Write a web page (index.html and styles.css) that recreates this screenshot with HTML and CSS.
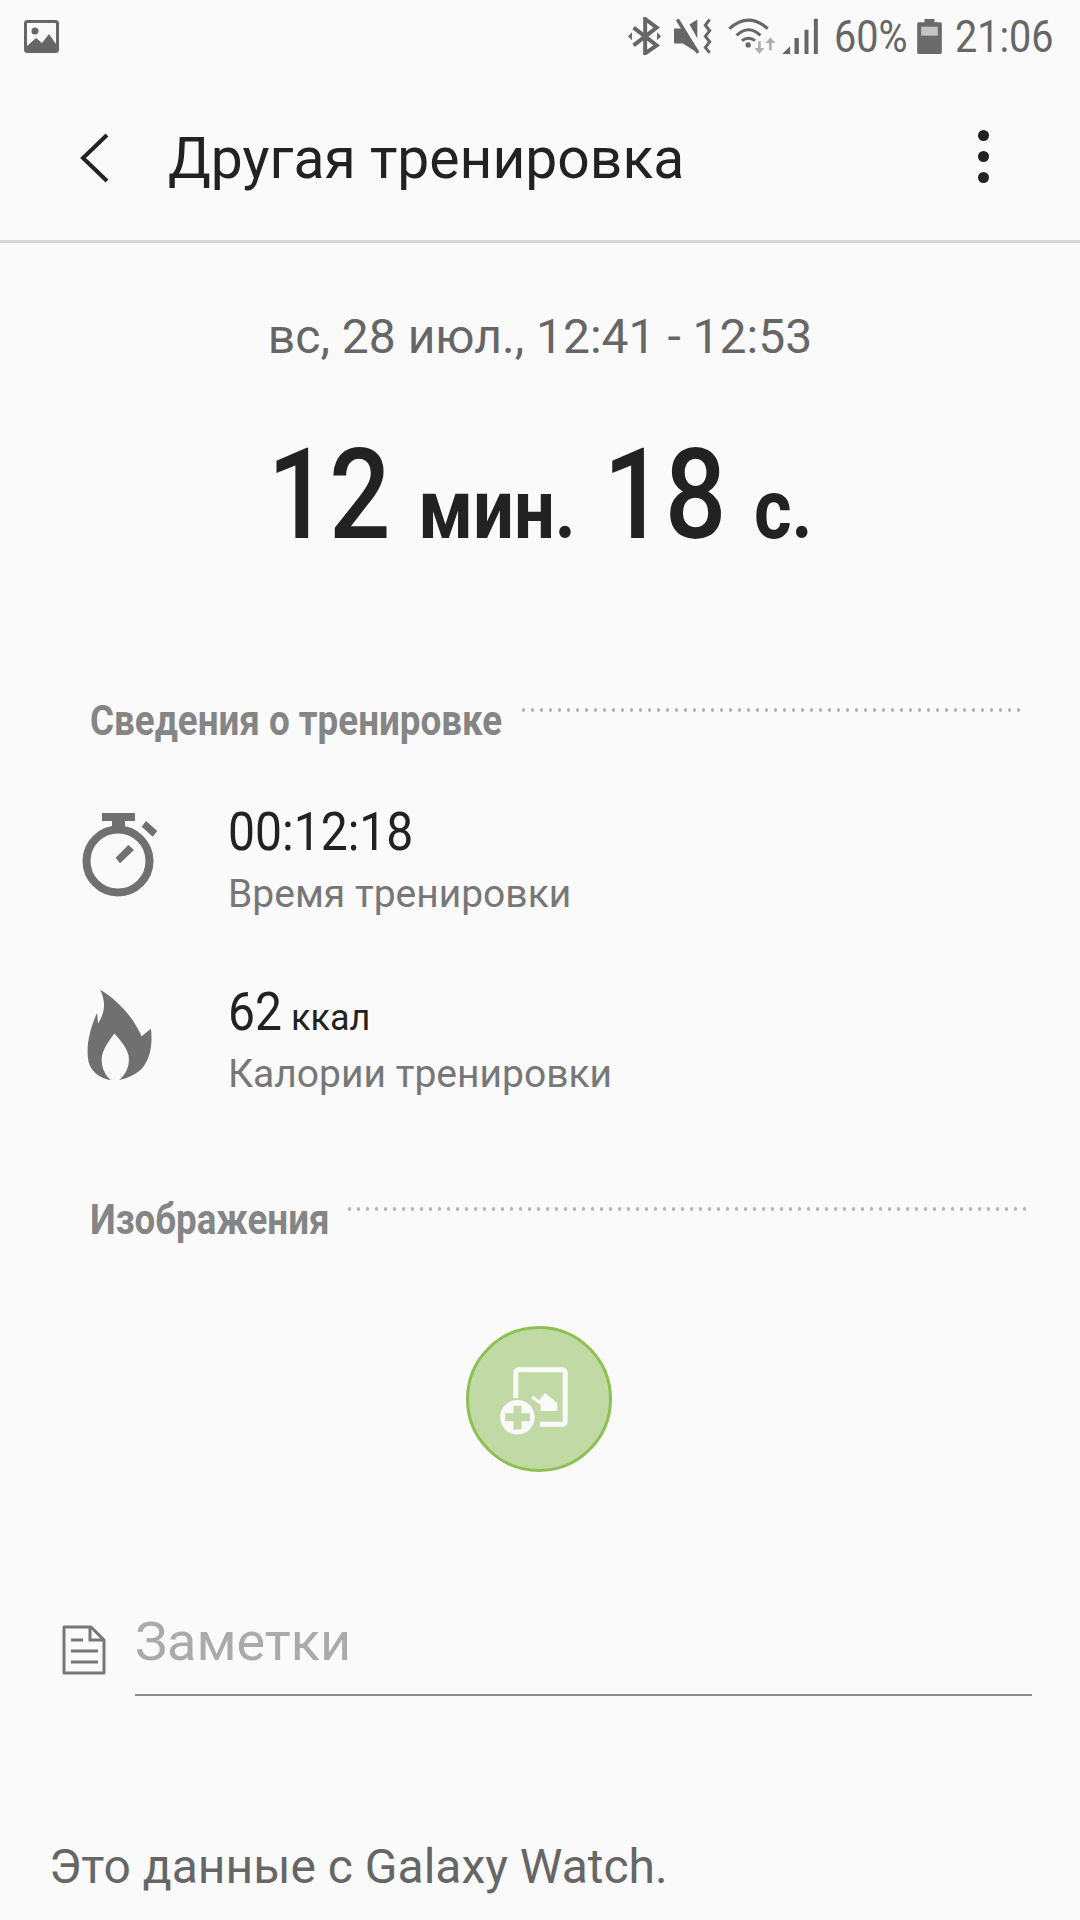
FILE: index.html
```html
<!DOCTYPE html>
<html lang="ru">
<head>
  <meta charset="UTF-8">
  <title>Другая тренировка</title>
  <link rel="stylesheet" href="styles.css">
</head>
<body>
  <div class="status-bar">
    <svg class="status-picture" width="35" height="33" viewBox="0 0 35 33">
      <rect x="1.500" y="1.500" width="32" height="30" rx="2" fill="none" stroke="#666" stroke-width="3"/>
      <circle cx="11" cy="11" r="3.500" fill="#666"/>
      <path fill="#666" d="M3 26l9-8 6 5 7-9 7 10v7H3z"/>
    </svg>
    <div class="status-right">
      <svg class="bt" width="33" height="38" viewBox="88 50 100 115">
        <path fill="none" stroke="#666" stroke-width="12" d="M105 82l70 54-35 24V56l35 26-70 54"/>
        <path fill="#666" d="M88 108l12-12v24zM188 108l-12-12v24z"/>
      </svg>
      <svg class="mute" width="39" height="36" viewBox="228 55 117 105">
        <path fill="#666" d="M228 85h27l43-27v100l-43-28h-27z"/>
        <path fill="none" stroke="#fafafa" stroke-width="20" d="M250 50l65 115"/>
        <path fill="none" stroke="#666" stroke-width="10" d="M238 58l62 100"/>
        <path fill="none" stroke="#666" stroke-width="9" d="M335 58l-13 17 13 17-13 16 13 17-13 17 13 16"/>
      </svg>
      <svg class="wifi" width="48" height="36" viewBox="390 50 145 108">
        <path fill="none" stroke="#666" stroke-width="9" d="M394 82Q452 30 510 82M416 102Q452 68 488 102M432 118Q452 104 472 118"/>
        <circle cx="451" cy="131" r="8" fill="#666"/>
        <path fill="#b0b0b0" d="M481 120h8v20h11l-15 18-15-18h11zM514 147h8v-22h11l-15-17-15 17h11z"/>
      </svg>
      <svg class="signal" width="36" height="36" viewBox="553 50 107 108">
        <path fill="#666" d="M553 158l24-23v23zM590 158v-48h13v48zM620 158V85h12v73zM648 158V52h12v106z"/>
      </svg>
      <span class="status-text percent"><span>60%</span></span>
      <svg class="battery" width="25" height="35" viewBox="953 55 74 105">
        <path fill="#6a6a6a" d="M975 55h30v10h17a5 5 0 0 1 5 5v85a5 5 0 0 1-5 5h-64a5 5 0 0 1-5-5V70a5 5 0 0 1 5-5h17z"/>
        <rect x="965" y="78" width="50" height="27" fill="#c4c4c4"/>
      </svg>
      <span class="status-text clock"><span>21:06</span></span>
    </div>
  </div>

  <div class="app-bar">
    <svg class="back" width="32" height="50" viewBox="0 0 32 50">
      <path fill="none" stroke="#222" stroke-width="4" d="M28 2L4 25l24 23"/>
    </svg>
    <div class="title">Другая тренировка</div>
    <div class="more"><i></i><i></i><i></i></div>
  </div>

  <div class="date">вс, 28 июл., 12:41 - 12:53</div>
  <div class="duration">
    <span class="big">12</span> <b>мин.</b> <span class="big">18</span> <b>с.</b>
  </div>

  <div class="section first">
    <h2 class="info-title"><span>Сведения о тренировке</span></h2>
    <div class="dots"></div>
  </div>

  <div class="stat">
    <svg class="stat-icon stopwatch" width="76" height="86" viewBox="0 0 76 86">
      <path fill="#707070" d="M20 1h33v8H43v6H30V9H20z"/>
      <circle cx="36" cy="49" r="31.500" fill="none" stroke="#707070" stroke-width="8"/>
      <path fill="#707070" d="M33.700 45.700L38 51.300 52 38l-5.700-5zM64 9l11.300 10-4.600 5.700-11-10z"/>
    </svg>
    <div>
      <div class="stat-value"><span class="digits clock-digits">00:12:18</span></div>
      <div class="stat-label">Время тренировки</div>
    </div>
  </div>

  <div class="stat">
    <svg class="stat-icon flame" width="76" height="93" viewBox="68 625 228 280">
      <path fill="#707070" d="M122 630C165 655 215 700 247 770L275 748C282 800 270 850 240 875C222 890 200 898 180 902C200 885 212 860 208 830C203 805 185 785 165 762C145 790 125 815 127 845C128 870 140 892 155 902C125 898 100 880 90 855C78 820 85 760 113 700L116 732C135 700 142 670 122 630Z"/>
    </svg>
    <div>
      <div class="stat-value"><span class="digits kcal-digits">62</span><small>ккал</small></div>
      <div class="stat-label">Калории тренировки</div>
    </div>
  </div>

  <div class="section second">
    <h2 class="images-title"><span>Изображения</span></h2>
    <div class="dots"></div>
  </div>

  <div class="fab-row">
    <div class="fab">
      <svg width="146" height="146" viewBox="47 50 440 440">
        <path fill="none" stroke="#fafafa" stroke-width="15" d="M197 268V190a8 8 0 0 1 8-8H338a8 8 0 0 1 8 8V338a8 8 0 0 1-8 8H270"/>
        <path fill="#fafafa" d="M285 252L322 282V306H272V288L243 268 250 260 268 274z"/>
        <circle cx="202" cy="325" r="52" fill="#fafafa"/>
        <path fill="#c1d9a4" d="M190 290h24v23h26v24h-26v25h-24v-25h-25v-24h25z"/>
      </svg>
    </div>
  </div>

  <div class="notes">
    <svg class="notes-icon" width="44" height="50" viewBox="0 0 44 50">
      <path fill="none" stroke="#777" stroke-width="3" stroke-linejoin="round" d="M2 2h27l13 13v33H2z"/>
      <path fill="none" stroke="#777" stroke-width="3" d="M28 2v13h14M9 15h12M9 26h27M9 37h27"/>
    </svg>
    <div class="notes-field">Заметки</div>
  </div>

  <div class="source">Это данные с Galaxy Watch.</div>
</body>
</html>
```

FILE: styles.css
```css
html, body {
  margin: 0;
  padding: 0;
}

body {
  width: 1080px;
  height: 1920px;
  overflow: hidden;
  background-color: #fafafa;
  font-family: Roboto, sans-serif;
  color: #222;
}

/* Status bar */
.status-bar {
  display: flex;
  justify-content: space-between;
  align-items: center;
  height: 72px;
  padding: 0 28px 0 24px;
}

.status-picture {
  display: block;
}

.status-right {
  display: flex;
  align-items: center;
}

.status-right svg {
  display: block;
}

.mute { margin-left: 13px; }
.wifi { margin-left: 15px; }
.signal { margin-left: 6px; }
.percent { margin-left: 16px; width: 70px; }
.battery { margin-left: 13px; }
.clock { margin-left: 13px; width: 97px; }

.status-text {
  margin-top: 2px;
  font-size: 45px;
  line-height: 40px;
  color: #666;
  white-space: nowrap;
}

.status-text span {
  display: inline-block;
  transform: scaleX(.88);
  transform-origin: left center;
}

/* App bar */
.app-bar {
  display: flex;
  align-items: center;
  height: 164px;
  padding: 4px 0 0 79px;
  border-bottom: 3px solid #d8d8d8;
}

.back {
  display: block;
}

.title {
  flex: 1;
  margin-left: 57px;
  font-size: 57px;
}

.more {
  display: flex;
  flex-direction: column;
  gap: 10px;
  margin: 0 91px 3px 0;
}

.more i {
  display: block;
  width: 11px;
  height: 11px;
  border-radius: 50%;
  background-color: #222;
}

/* Summary */
.date {
  margin-top: 64px;
  text-align: center;
  font-size: 48px;
  line-height: 60px;
  color: #666;
}

.duration {
  display: flex;
  justify-content: center;
  align-items: baseline;
  gap: 32px;
  margin-top: 48px;
  height: 160px;
  font-size: 84px;
  transform: scaleX(.86);
}

.duration .big {
  font-size: 126px;
  line-height: 160px;
  font-weight: 500;
}

/* Sections */
.section {
  display: flex;
  align-items: center;
  margin-left: 90px;
}

.section.first {
  margin-top: 122px;
  width: 931px;
}

.section.second {
  margin-top: 91px;
  width: 936px;
}

.section h2 {
  margin: 0;
  font-size: 42px;
  line-height: 48px;
  font-weight: 700;
  color: #858585;
  white-space: nowrap;
}

.section h2 span {
  display: inline-block;
  transform: scaleX(.875);
  transform-origin: left center;
}

.info-title { width: 410px; }
.images-title { width: 236px; }

.dots {
  flex: 1;
  height: 4px;
  margin: 0 0 22px 19px;
  background: radial-gradient(circle, #b4b4b4 1.500px, transparent 2px) 0 0 / 9px 4px;
}

/* Stats */
.stat {
  display: flex;
  align-items: center;
  margin-top: 56px;
  padding-left: 82px;
}

.stat-icon {
  display: block;
  margin-right: 70px;
}

.stopwatch { margin-bottom: 16px; }
.flame { margin-bottom: 18px; }

.stat-value {
  display: flex;
  align-items: baseline;
  height: 62px;
  font-size: 54px;
  line-height: 62px;
  white-space: nowrap;
}

.digits {
  display: inline-block;
  transform: scaleX(.89);
  transform-origin: left center;
}

.clock-digits { width: 185px; }
.kcal-digits { width: 50px; }

.stat-value small {
  margin-left: 13px;
  font-size: 36px;
}

.stat-label {
  font-size: 39px;
  line-height: 62px;
  color: #777;
}

/* Add picture button */
.fab-row {
  display: flex;
  justify-content: center;
  margin-top: 82px;
  padding-right: 2px;
}

.fab {
  width: 146px;
  height: 146px;
  box-sizing: border-box;
  border: 3px solid #8cc152;
  border-radius: 50%;
  background-color: #c1d9a4;
}

.fab svg {
  display: block;
  margin: -3px;
}

/* Notes */
.notes {
  display: flex;
  align-items: flex-end;
  margin-top: 142px;
  padding-left: 62px;
}

.notes-icon {
  display: block;
  margin-right: 29px;
  margin-bottom: 21px;
}

.notes-field {
  width: 897px;
  height: 80px;
  border-bottom: 2px solid #8c8c8c;
  font-size: 54px;
  line-height: 56px;
  color: #aaa;
}

.source {
  margin-top: 141px;
  padding-left: 49px;
  font-size: 48px;
  line-height: 60px;
  color: #666;
}
```
